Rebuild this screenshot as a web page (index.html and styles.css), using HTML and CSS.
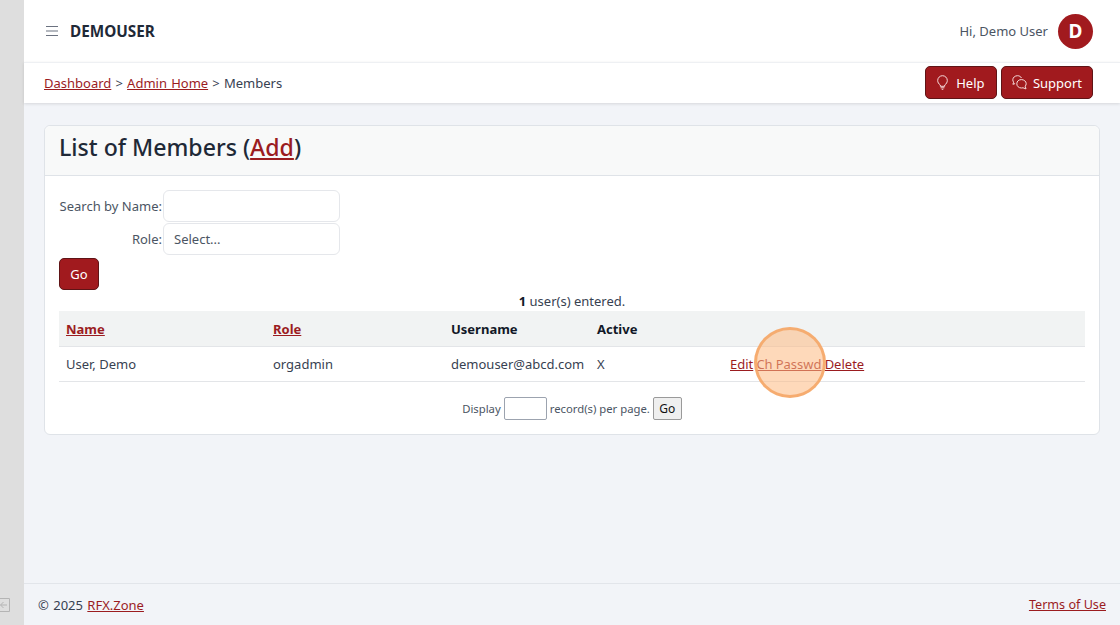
FILE: index.html
```html
<!DOCTYPE html>
<html lang="en">
<head>
<meta charset="utf-8">
<title>Members</title>
<link rel="stylesheet" href="styles.css">
</head>
<body>
<div class="shell">
  <aside class="rail">
    <svg class="rail-icon" width="10" height="14" viewBox="0 0 10 14" fill="none" stroke="#b4b4b4" stroke-width="1"><path d="M0 .5h9.500v13H0M7 7H.5M3.500 4 .5 7l3 3"/></svg>
  </aside>
  <div class="main">
    <header class="topbar">
      <div class="brand">
        <svg class="burger" width="14" height="12" viewBox="0 0 14 12" stroke="#6b7280" stroke-width="1.2"><path d="M1 1.500h12M1 6h12M1 10.500h12"/></svg>
        <span class="brand-name">DEMOUSER</span>
      </div>
      <div class="user">
        <span class="hello">Hi, Demo User</span>
        <span class="avatar">D</span>
      </div>
    </header>
    <nav class="crumbbar">
      <div class="crumbs"><a href="#">Dashboard</a> &gt; <a href="#">Admin Home</a> &gt; Members</div>
      <div class="actions">
        <button class="btn btn-icon btn-help">
          <svg width="11" height="15" viewBox="0 0 11 15" fill="none" stroke="#f6dcdc" stroke-width="1"><path d="M3.300 10C1.700 8.900.7 7.400.7 5.500a4.800 4.800 0 0 1 9.600 0c0 1.900-1 3.400-2.600 4.500v1.300H3.300zM3.600 12.800h3.800M4.700 14.300h1.600"/></svg>
          Help
        </button>
        <button class="btn btn-icon">
          <svg width="15" height="15" viewBox="0 0 15 15" fill="none" stroke="#f6dcdc" stroke-width="1"><path d="M9.500 3C8.800 1.600 7.300.7 5.500.7 3 .7.800 2.500.8 4.800c0 .9.300 1.700.8 2.400L.9 9.300l2.200-.7"/><path d="M4.800 8.700c0-2.500 2-4.100 4.600-4.100s4.800 1.700 4.800 4.100c0 1-.4 1.800-1 2.500l.8 2.700-3-1.100c-.5.100-1 .2-1.600.2-2.600 0-4.600-1.800-4.600-4.300z"/></svg>
          Support
        </button>
      </div>
    </nav>
    <main class="content">
      <section class="card">
        <h1 class="card-title">List of Members (<a href="#">Add</a>)</h1>
        <div class="card-body">
          <form class="filters">
            <label class="field"><span class="field-label">Search by Name:</span><input class="control" type="text"></label>
            <label class="field"><span class="field-label">Role:</span><span class="control select">Select...</span></label>
            <button class="btn btn-go" type="button">Go</button>
          </form>
          <p class="count"><b>1</b> user(s) entered.</p>
          <table class="members">
            <thead>
              <tr><th class="c1"><a href="#">Name</a></th><th class="c2"><a href="#">Role</a></th><th class="c3">Username</th><th class="c4">Active</th><th></th></tr>
            </thead>
            <tbody>
              <tr><td>User, Demo</td><td>orgadmin</td><td>demouser@abcd.com</td><td>X</td><td class="row-actions"><a href="#">Edit</a> <a href="#">Ch Passwd</a> <a href="#">Delete</a><span class="spot"></span></td></tr>
            </tbody>
          </table>
          <div class="pager">Display <input class="pager-input" type="text"> record(s) per page. <button class="pager-go" type="button">Go</button></div>
        </div>
      </section>
    </main>
    <footer class="footer">
      <div class="copy">© 2025 <a href="#">RFX.Zone</a></div>
      <a class="terms" href="#">Terms of Use</a>
    </footer>
  </div>
</div>
</body>
</html>
```
FILE: styles.css
```css
* { box-sizing: border-box; }
html, body { margin: 0; height: 100%; }
body {
  font-family: "Noto Sans", "Open Sans", sans-serif;
  font-size: 13px;
  color: #374151;
  background: #f2f4f8;
  overflow: hidden;
}
a { color: #9b1c1f; text-decoration: underline; }
.shell { display: flex; height: 625px; }
.rail { width: 24px; flex: none; background: #dedede; position: relative; }
.rail-icon { position: absolute; left: 0; top: 598px; }
.main { flex: 1; display: flex; flex-direction: column; min-width: 0; }
.topbar {
  height: 62px; flex: none; background: #fff;
  display: flex; align-items: center; justify-content: space-between;
  padding: 0 27px 0 21px;
}
.brand { display: flex; align-items: center; gap: 11px; }
.burger { display: block; }
.brand-name { font-size: 15.300px; font-weight: 700; color: #1f2937; }
.user { display: flex; align-items: center; gap: 10px; }
.hello { color: #4b5563; }
.avatar {
  width: 35px; height: 35px; border-radius: 50%; background: #a11a1e; color: #fff;
  font-size: 19px; font-weight: 700;
  display: flex; align-items: center; justify-content: center;
}
.crumbbar {
  height: 41px; flex: none; background: #fff;
  border-top: 1px solid #eef0f3;
  box-shadow: 0 1px 3px rgba(0,0,0,.12);
  display: flex; align-items: center; justify-content: space-between;
  padding: 0 27px 0 20px;
  position: relative;
}
.crumbs { color: #374151; word-spacing: .8px; }
.actions { display: flex; gap: 4px; margin-top: -1px; }
.btn {
  font: inherit; color: #fff; background: #a11a1e;
  border: 1px solid #5f1416; border-radius: 5px; padding: 0;
  display: flex; align-items: center; justify-content: center;
}
.btn-icon { height: 33px; padding: 0 10px; gap: 6px; }
.btn-help { width: 72px; gap: 8px; }
.content { flex: 1; padding: 22px 20px 0; min-height: 0; }
.card {
  background: #fff; border: 1px solid #dfe3e8; border-radius: 6px;
  height: 310px;
}
.card-title {
  margin: 0; height: 50px; padding: 0 14px;
  font-size: 23.100px; font-weight: 500; color: #1f2937;
  background: #f8f9f9; border-bottom: 1px solid #dfe3e8;
  border-radius: 6px 6px 0 0;
  line-height: 42px;
}
.card-body { padding: 14px 14px 0; }
.field { display: flex; align-items: center; gap: 1px; margin-bottom: 1px; }
.field-label { width: 103px; flex: none; text-align: right; white-space: nowrap; color: #4b5563; }
.control {
  width: 177px; height: 32px; border: 1px solid #e5e7eb; border-radius: 6px;
  background: #fff; font: inherit; color: #4b5563;
}
.select { display: flex; align-items: center; padding-left: 10px; }
.btn-go { width: 40px; height: 32px; margin-top: 3px; }
.count { margin: 0; height: 21px; text-align: center; line-height: 23px; color: #374151; }
.count b { color: #111827; }
.members { width: 100%; border-collapse: collapse; table-layout: fixed; }
.members th {
  height: 35px; padding: 1px 7px 0; text-align: left; font-weight: 700; color: #111827;
  background: #f1f3f3; border-bottom: 1px solid #e3e5e8;
}
.members td {
  height: 35px; padding: 0 7px; color: #374151; border-bottom: 1px solid #e3e5e8;
}
.c1 { width: 207px; }
.c2 { width: 178px; }
.c3 { width: 146px; }
.c4 { width: 133px; }
.row-actions { position: relative; white-space: nowrap; word-spacing: -.3px; }
.spot {
  position: absolute; left: 31px; top: -20px; width: 72px; height: 71px;
  border-radius: 50%; background: rgba(253,186,130,.55); border: 3px solid rgba(245,165,100,.85);
}
.pager { margin-top: 15px; font-size: 11.300px; color: #4b5563; display: flex; justify-content: center; align-items: center; gap: 3px; }
.pager-input { width: 43px; height: 23px; border: 1px solid #9ca3af; border-radius: 2px; background: #fff; padding: 0; }
.pager-go {
  width: 29px; height: 23px; padding: 0; font: inherit; font-size: 12px; color: #111;
  background: #efefef; border: 1px solid #9a9a9a; border-radius: 2px;
}
.footer {
  height: 42px; flex: none; border-top: 1px solid #e2e5ea;
  display: flex; align-items: center; justify-content: space-between;
  padding: 0 14px; color: #374151;
}
.copy { word-spacing: 1px; }
.terms { font-size: 12.600px; }
```
